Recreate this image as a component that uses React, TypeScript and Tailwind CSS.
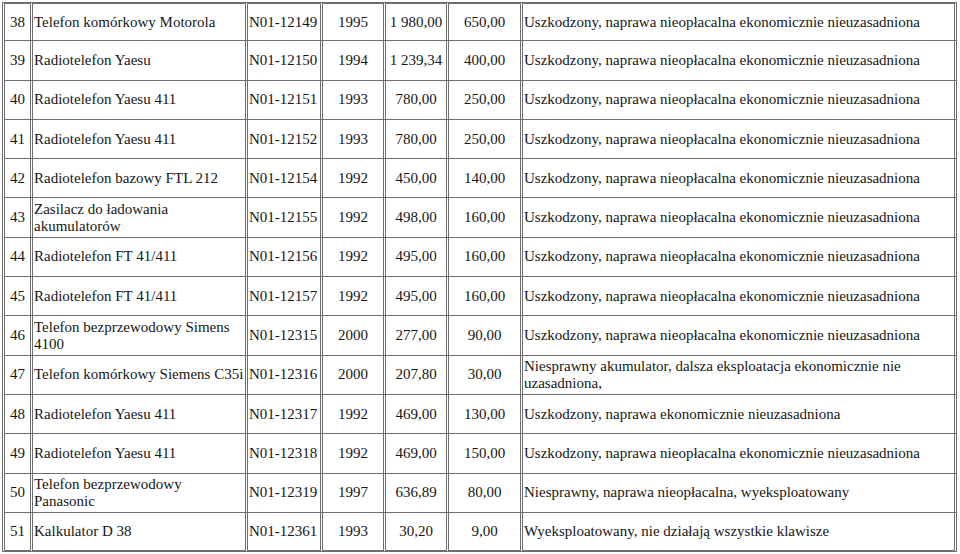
import React from "react";

type Row = {
  no: string;
  name: React.ReactNode;
  id: string;
  year: string;
  price: string;
  value: string;
  note: React.ReactNode;
};

const bad = "Uszkodzony, naprawa nieopłacalna ekonomicznie nieuzasadniona";

const rows: Row[] = [
  { no: "38", name: "Telefon komórkowy Motorola", id: "N01-12149", year: "1995", price: "1 980,00", value: "650,00", note: bad },
  { no: "39", name: "Radiotelefon Yaesu", id: "N01-12150", year: "1994", price: "1 239,34", value: "400,00", note: bad },
  { no: "40", name: "Radiotelefon Yaesu 411", id: "N01-12151", year: "1993", price: "780,00", value: "250,00", note: bad },
  { no: "41", name: "Radiotelefon Yaesu 411", id: "N01-12152", year: "1993", price: "780,00", value: "250,00", note: bad },
  { no: "42", name: "Radiotelefon bazowy FTL 212", id: "N01-12154", year: "1992", price: "450,00", value: "140,00", note: bad },
  {
    no: "43",
    name: (
      <>
        Zasilacz do ładowania
        <br />
        akumulatorów
      </>
    ),
    id: "N01-12155",
    year: "1992",
    price: "498,00",
    value: "160,00",
    note: bad,
  },
  { no: "44", name: "Radiotelefon FT 41/411", id: "N01-12156", year: "1992", price: "495,00", value: "160,00", note: bad },
  { no: "45", name: "Radiotelefon FT 41/411", id: "N01-12157", year: "1992", price: "495,00", value: "160,00", note: bad },
  {
    no: "46",
    name: (
      <>
        Telefon bezprzewodowy Simens
        <br />
        4100
      </>
    ),
    id: "N01-12315",
    year: "2000",
    price: "277,00",
    value: "90,00",
    note: bad,
  },
  {
    no: "47",
    name: "Telefon komórkowy Siemens C35i",
    id: "N01-12316",
    year: "2000",
    price: "207,80",
    value: "30,00",
    note: (
      <>
        Niesprawny akumulator, dalsza eksploatacja ekonomicznie nie
        <br />
        uzasadniona,
      </>
    ),
  },
  { no: "48", name: "Radiotelefon Yaesu 411", id: "N01-12317", year: "1992", price: "469,00", value: "130,00", note: "Uszkodzony, naprawa ekonomicznie nieuzasadniona" },
  { no: "49", name: "Radiotelefon Yaesu 411", id: "N01-12318", year: "1992", price: "469,00", value: "150,00", note: bad },
  {
    no: "50",
    name: (
      <>
        Telefon bezprzewodowy
        <br />
        Panasonic
      </>
    ),
    id: "N01-12319",
    year: "1997",
    price: "636,89",
    value: "80,00",
    note: "Niesprawny, naprawa nieopłacalna, wyeksploatowany",
  },
  { no: "51", name: "Kalkulator D 38", id: "N01-12361", year: "1993", price: "30,20", value: "9,00", note: "Wyeksploatowany, nie działają wszystkie klawisze" },
];

const App = () => {
  const cell = "border-double border-r-[3px] border-b border-[#6e6e6e] align-middle whitespace-nowrap";
  return (
    <div className="w-[960px] h-[554px] bg-white overflow-hidden pt-[2px] pl-[2px]">
      <table
        className="table-fixed w-[955px] border-separate border-spacing-0 text-[15px] leading-[17px] text-[#161616]"
        style={{ fontFamily: '"Liberation Serif", "Times New Roman", serif' }}
      >
        <colgroup>
          <col className="w-[31px]" />
          <col className="w-[215px]" />
          <col className="w-[75px]" />
          <col className="w-[63px]" />
          <col className="w-[63px]" />
          <col className="w-[74px]" />
          <col className="w-[434px]" />
        </colgroup>
        <tbody>
          {rows.map((r, i) => {
            const top = i === 0 ? " border-t-2" : "";
            const bottom = i === rows.length - 1 ? " border-b-2" : "";
            const c = cell + top + bottom;
            return (
              <tr key={r.no} className="h-[39.3px]">
                <td className={c + " border-l-[3px] text-center"}>{r.no}</td>
                <td className={c + " pl-[1px]"}>{r.name}</td>
                <td className={c + " pl-[1px]"}>{r.id}</td>
                <td className={c + " text-center"}>{r.year}</td>
                <td className={c + " text-center"}>{r.price}</td>
                <td className={c + " text-center"}>{r.value}</td>
                <td className={c + " pl-[1px]"}>{r.note}</td>
              </tr>
            );
          })}
        </tbody>
      </table>
    </div>
  );
};

export default App;
